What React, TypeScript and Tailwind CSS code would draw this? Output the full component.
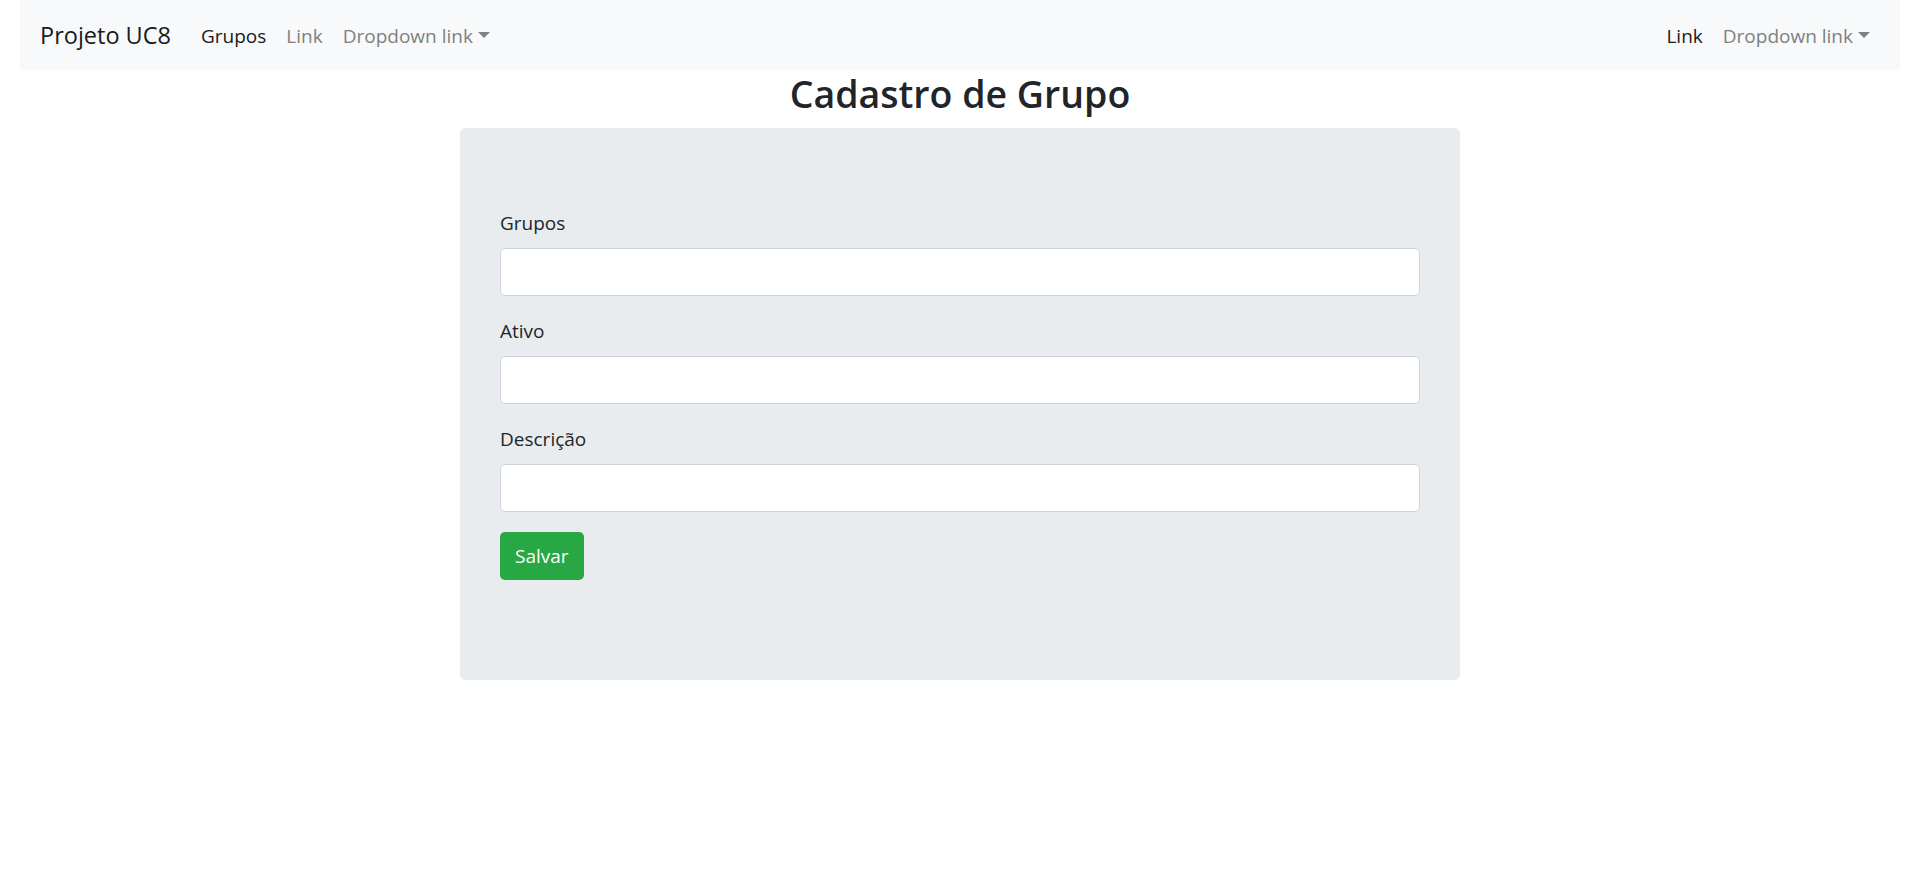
import React from 'react';

const font = { fontFamily: '"Open Sans", "Noto Sans", sans-serif' };

function Caret() {
    return <span className="ml-[5px] inline-block align-[5px] border-t-[6px] border-x-[6px] border-x-transparent border-t-current" />;
}

function Navbar() {
    return (
    <nav className="mx-[20px] h-[70px] bg-[#f8f9fa] px-[20px] pt-[2px] flex flex-row items-center">
        <a className="text-[23.5px] text-[#1a1a1a] mr-[20px]">Projeto UC8</a>
        <ul className="flex flex-row items-center text-[19px]">
            <li className="px-[10px] text-[#1a1a1a]">Grupos</li>
            <li className="px-[10px] text-[#7f8081]">Link</li>
            <li className="px-[10px] text-[#7f8081]">Dropdown link<Caret /></li>
        </ul>
        <ul className="ml-auto flex flex-row items-center text-[19px]">
            <li className="px-[10px] text-[#1a1a1a]">Link</li>
            <li className="px-[10px] text-[#7f8081]">Dropdown link<Caret /></li>
        </ul>
    </nav>
    );
}

function Field({ label }: { label: string }) {
    return (
    <div className="mb-[20px]">
        <label className="block text-[19px] leading-[30px] mb-[10px] text-[#212529]">{label}</label>
        <input className="block w-full h-[48px] bg-white border border-[#ced4da] rounded-[5px] px-[15px] outline-none" />
    </div>
    );
}

export default function App() {
    return (
    <div className="min-h-[884px] bg-white" style={font}>
        <Navbar />
        <h2 className="text-center text-[37.5px] leading-[48px] font-semibold text-[#212529] mb-[10px]">Cadastro de Grupo</h2>
        <div className="mx-auto w-[1000px] bg-[#e9ecef] rounded-[6px] px-[40px] py-[80px]">
            <form>
                <Field label="Grupos" />
                <Field label="Ativo" />
                <Field label="Descrição" />
                <div className="mb-[20px]">
                    <button type="button" className="h-[48px] px-[15px] bg-[#28a745] text-white text-[19px] rounded-[5px]">Salvar</button>
                </div>
            </form>
        </div>
    </div>
    );
}
